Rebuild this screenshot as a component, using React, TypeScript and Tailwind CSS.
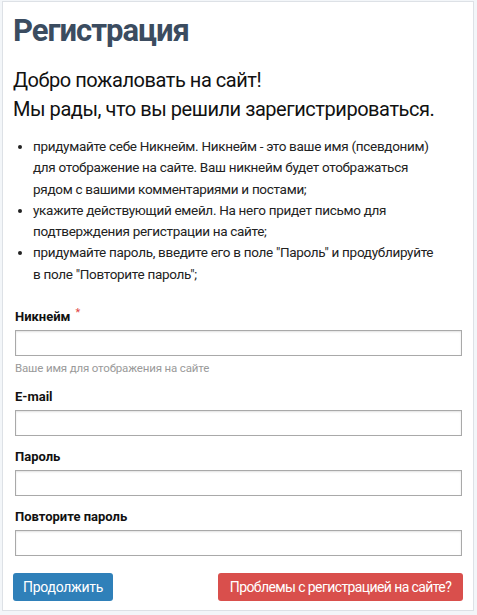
import React from "react";

const font = { fontFamily: "Roboto, 'Liberation Sans', sans-serif" };

function Field({ label, required, help }: { label: string; required?: boolean; help?: string }) {
  return (
    <div className="flex flex-col">
      <div className="h-[19px] flex items-center text-[13px] font-bold text-[#111]">
        {label}
        {required && <span className="ml-[5px] text-[#e04646] text-[11px] font-normal relative -top-[3px]">*</span>}
      </div>
      <input
        type="text"
        className="mt-[4px] h-[26px] w-full border border-[#a9a9a9] bg-white shadow-[inset_0_1px_2px_rgba(0,0,0,0.12)] outline-none"
      />
      {help && <div className="mt-[4px] text-[11.5px] leading-[16px] tracking-[-0.15px] text-[#9a9a9a]">{help}</div>}
    </div>
  );
}

const items: string[][] = [
  [
    "придумайте себе Никнейм. Никнейм - это ваше имя (псевдоним)",
    "для отображение на сайте. Ваш никнейм будет отображаться",
    "рядом с вашими комментариями и постами;",
  ],
  ["укажите действующий емейл. На него придет письмо для", "подтверждения регистрации на сайте;"],
  ['придумайте пароль, введите его в поле "Пароль" и продублируйте', 'в поле "Повторите пароль";'],
];

export default function App() {
  return (
    <div className="min-h-[615px] bg-[#f3f6f9] pt-px pl-[2px]" style={font}>
      <div className="w-[472px] h-[610px] bg-white border border-[#dde1e6] pl-[10px] pr-[10px]">
        <h1 className="mt-[9px] text-[31px] leading-[40px] font-bold text-[#3b4c60] tracking-[-1px]">Регистрация</h1>
        <p className="mt-[16px] text-[20px] leading-[26px] tracking-[-0.45px] text-[#111]">Добро пожаловать на сайт!</p>
        <p className="mt-[3px] text-[20px] leading-[26px] tracking-[-0.45px] text-[#111]">Мы рады, что вы решили зарегистрироваться.</p>
        <ul className="mt-[14px] list-disc pl-[20px] text-[13.5px] leading-[21.3px] tracking-[-0.3px] text-[#222]">
          {items.map((lines, i) => (
            <li key={i}>
              {lines.map((l, j) => (
                <React.Fragment key={j}>
                  {j > 0 && <br />}
                  <span className="whitespace-nowrap">{l}</span>
                </React.Fragment>
              ))}
            </li>
          ))}
        </ul>
        <div className="mt-[22px] pl-[2px] pr-px flex flex-col">
          <Field label="Никнейм" required help="Ваше имя для отображения на сайте" />
          <div className="mt-[11px]"><Field label="E-mail" /></div>
          <div className="mt-[11px]"><Field label="Пароль" /></div>
          <div className="mt-[11px]"><Field label="Повторите пароль" /></div>
        </div>
        <div className="mt-[17px] flex justify-between">
          <button className="h-[28px] w-[100px] rounded-[3px] bg-[#2f80b9] text-white text-[14px] tracking-[-0.3px]">Продолжить</button>
          <button className="h-[28px] w-[245px] rounded-[3px] bg-[#d94f4c] text-white text-[14px] tracking-[-0.6px] whitespace-nowrap">Проблемы с регистрацией на сайте?</button>
        </div>
      </div>
    </div>
  );
}
